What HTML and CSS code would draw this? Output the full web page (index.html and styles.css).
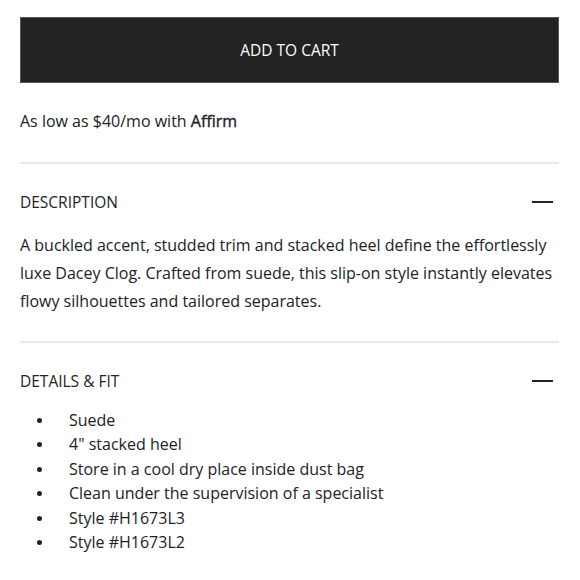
FILE: index.html
```html
<!DOCTYPE html>
<html>
<head>
<meta charset="utf-8">
<link rel="stylesheet" href="styles.css">
</head>
<body>
<div class="page">
  <button class="cart-btn">ADD TO CART</button>
  <p class="affirm">As low as $40/mo with <span class="affirm-brand">Affirm</span></p>
  <section class="acc">
    <div class="acc-head">
      <span class="acc-title">DESCRIPTION</span>
      <span class="acc-dash"></span>
    </div>
    <p class="desc">A buckled accent, studded trim and stacked heel define the effortlessly luxe Dacey Clog. Crafted from suede, this slip-on style instantly elevates flowy silhouettes and tailored separates.</p>
  </section>
  <section class="acc">
    <div class="acc-head">
      <span class="acc-title">DETAILS &amp; FIT</span>
      <span class="acc-dash"></span>
    </div>
    <ul class="details">
      <li>Suede</li>
      <li>4" stacked heel</li>
      <li>Store in a cool dry place inside dust bag</li>
      <li>Clean under the supervision of a specialist</li>
      <li>Style #H1673L3</li>
      <li>Style #H1673L2</li>
    </ul>
  </section>
</div>
</body>
</html>
```
FILE: styles.css
```css
html, body {
  margin: 0;
  padding: 0;
  background: #fff;
}
body {
  font-family: "Open Sans", "Liberation Sans", sans-serif;
  color: #222;
  font-size: 16px;
}
.page {
  padding: 17px 21px 0 20px;
}
.cart-btn {
  display: block;
  width: 100%;
  height: 66px;
  background: #222;
  border: 1px solid #555;
  color: #fff;
  font-family: inherit;
  font-size: 15.5px;
  padding: 0;
  margin: 0;
}
.affirm {
  margin: 0;
  padding: 27px 0 30px;
  line-height: 22px;
  border-bottom: 2px solid #e9e9e9;
}
.affirm-brand {
  -webkit-text-stroke: 0.35px currentColor;
}
.acc {
  border-bottom: 2px solid #e9e9e9;
}
.acc-head {
  display: flex;
  justify-content: space-between;
  align-items: center;
  height: 76px;
}
.acc-title {
  font-size: 15.5px;
}
.acc-dash {
  width: 21px;
  height: 2px;
  background: #222;
  margin-right: 6px;
}
.desc {
  margin: -9px 0 0;
  line-height: 28px;
  padding-bottom: 26px;
}
.details {
  margin: -11px 0 0;
  padding: 0 0 0 49px;
  line-height: 24.4px;
  list-style: none;
}
.details li {
  position: relative;
}
.details li::before {
  content: "";
  position: absolute;
  left: -32px;
  top: 10px;
  width: 5px;
  height: 5px;
  border-radius: 50%;
  background: #222;
}
.acc:last-child {
  border-bottom: none;
}
```
